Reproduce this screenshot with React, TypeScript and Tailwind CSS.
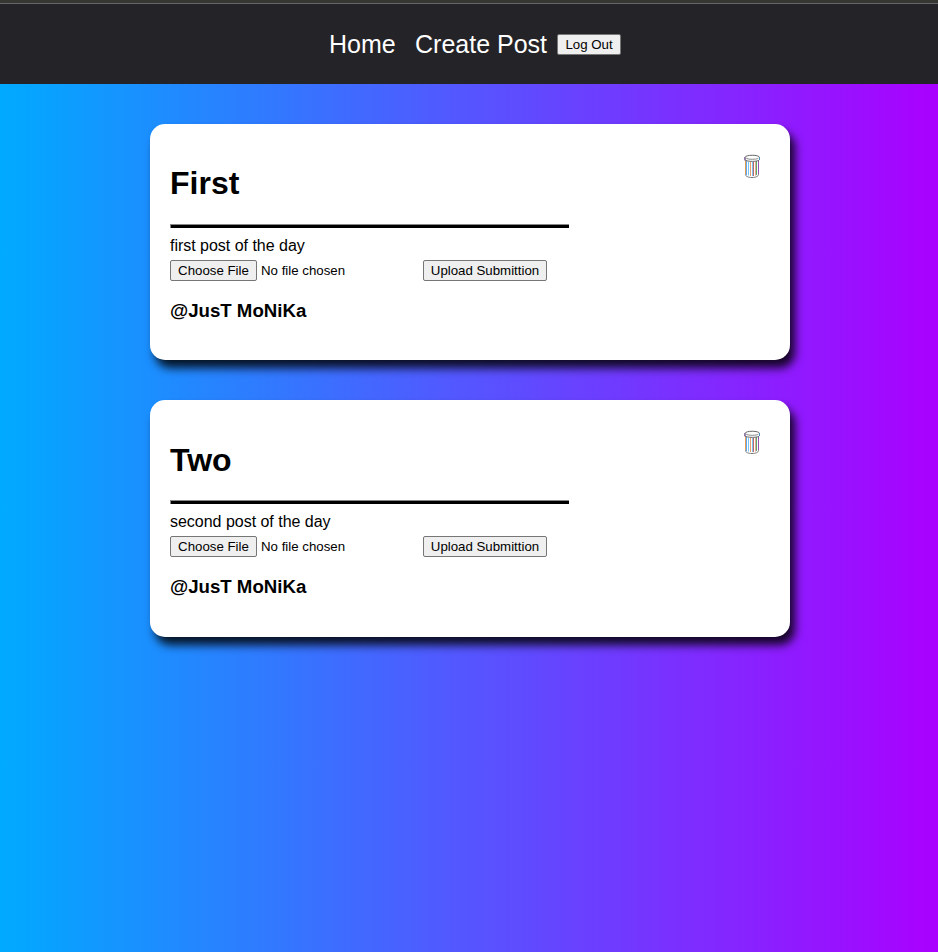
type Post = { title: string; body: string; author: string };

const posts: Post[] = [
  { title: "First", body: "first post of the day", author: "@JusT MoNiKa" },
  { title: "Two", body: "second post of the day", author: "@JusT MoNiKa" },
];

const buttonClass =
  "h-[21px] shrink-0 whitespace-nowrap rounded-[2px] border border-[#767676] bg-[#efefef] text-center text-[13.28px] leading-[19px] text-black";

function TrashIcon() {
  return (
    <svg width="18" height="26" viewBox="0 0 18 26" fill="none" aria-hidden="true">
      <path d="M1.500 7v14.500c0 1.800 2.700 3 6.500 3s6.500-1.200 6.500-3V7" stroke="#777" />
      <path d="M1.500 7.500v13.500" stroke="#e89c50" />
      <path d="M2.500 8v14" stroke="#5ea9f2" />
      <path d="M4.500 9v13.500" stroke="#79c4f7" />
      <path d="M6.500 9v14" stroke="#e5a06f" />
      <path d="M8.500 9v14" stroke="#83c2ed" />
      <path d="M9.500 9v14" stroke="#b9696c" />
      <path d="M11.500 9v13.500" stroke="#e8a987" />
      <path d="M12.500 8v14" stroke="#58a574" />
      <path d="M14.500 7.500v13.500" stroke="#9254b0" />
      <path d="M1 4.500c0-3 14.500-3 14.500 0v2c0 2.500-14.500 2.500-14.500 0z" fill="white" stroke="#666" />
      <path d="M2 5c1 1.700 11.500 1.700 12.500 0" stroke="#888" />
      <path d="M.9 4v3.500" stroke="#7950a0" />
      <path d="M15.500 4v3" stroke="#4995bd" />
    </svg>
  );
}

function PostCard({ post }: { post: Post }) {
  return (
    <article className="flex h-[236.400px] w-[640px] justify-between rounded-[15px] bg-white px-5 shadow-[5px_8px_10px_rgba(0,0,0,0.85)]">
      <div className="w-[400px]">
        <h1 className="mt-[41.300px] h-[58.700px] text-[32px] leading-[37px] font-bold">{post.title}</h1>
        <div className="h-1 w-[399px] border-t border-l border-[#888] bg-black" />
        <p className="mt-[9px] text-base leading-[18px] tracking-[-0.020px]">{post.body}</p>
        <div className="mt-[5px] flex h-[21px]">
          <button className={`${buttonClass} w-[87px]`}>Choose File</button>
          <span className="ml-1 w-[162px] text-[13.28px] leading-[21px]">No file chosen</span>
          <button className={`${buttonClass} w-[124px]`}>Upload Submittion</button>
        </div>
        <h3 className="mt-[19px] text-[18.650px] leading-[22px] font-bold">{post.author}</h3>
      </div>
      <button className="mt-[29px] mr-[8px] h-[26px] w-[18px]" aria-label="Delete post">
        <TrashIcon />
      </button>
    </article>
  );
}

export default function App() {
  return (
    <div className="min-h-screen bg-linear-to-r/srgb from-[#00aaff] to-[#aa00ff] font-['Liberation_Sans',Arial,sans-serif] text-black">
      <div className="h-1 border-b border-[#666] bg-[#363632]" />
      <nav className="flex h-20 items-center bg-[#242328] pl-[329px] text-[25px] text-white">
        <a className="w-[86px] leading-[29px]">Home</a>
        <a className="w-[142px] whitespace-nowrap leading-[29px]">Create Post</a>
        <button className={`${buttonClass} w-16`}>Log Out</button>
      </nav>
      <main className="flex flex-col items-center gap-10 pt-10 pl-0.5">
        {posts.map((post) => (
          <PostCard key={post.title} post={post} />
        ))}
      </main>
    </div>
  );
}
